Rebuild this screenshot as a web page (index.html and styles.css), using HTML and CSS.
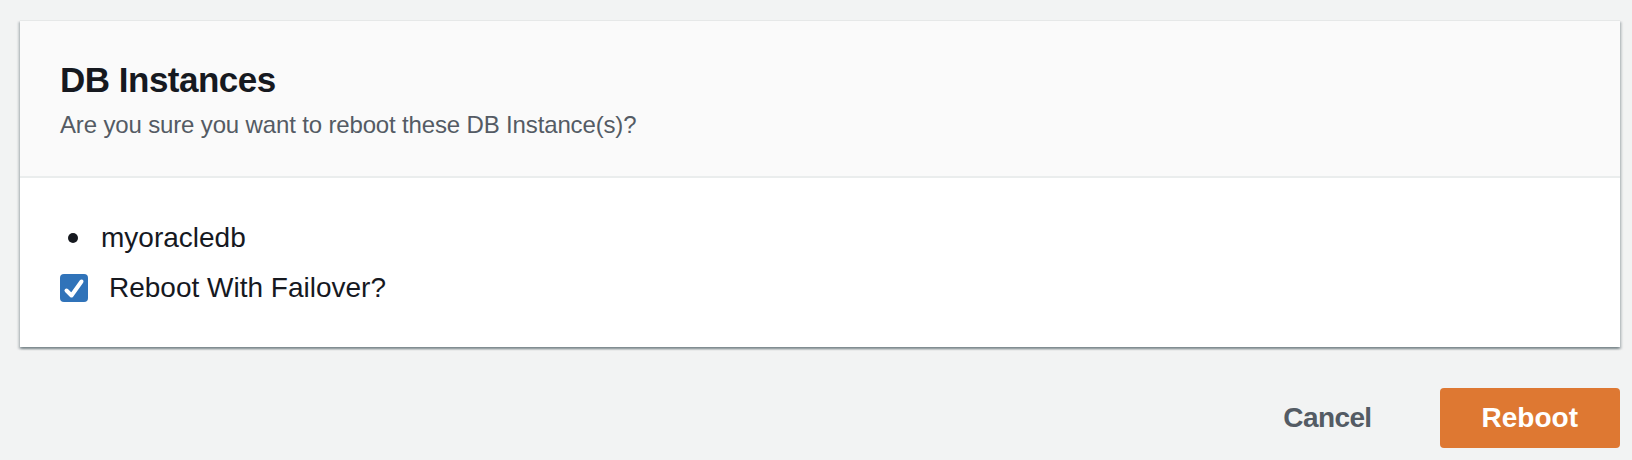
FILE: index.html
```html
<!DOCTYPE html>
<html lang="en">
<head>
<meta charset="utf-8">
<title>Reboot DB Instances</title>
<link rel="stylesheet" href="styles.css">
</head>
<body>
<div class="page">
  <section class="card">
    <header class="card-header">
      <h2 class="card-title">DB Instances</h2>
      <p class="card-desc">Are you sure you want to reboot these DB Instance(s)?</p>
    </header>
    <div class="card-body">
      <div class="item">
        <span class="dot"></span>
        <span class="item-text">myoracledb</span>
      </div>
      <label class="check-row">
        <span class="checkbox">
          <svg width="28" height="28" viewBox="0 0 28 28" aria-hidden="true">
            <path d="M6.5 16.5 L11.5 21.5 L21.5 7.5" fill="none" stroke="#fff" stroke-width="4" stroke-linecap="round" stroke-linejoin="round"/>
          </svg>
        </span>
        <span class="check-text">Reboot With Failover?</span>
      </label>
    </div>
  </section>
  <footer class="actions">
    <button class="btn btn-link" type="button">Cancel</button>
    <button class="btn btn-primary" type="button">Reboot</button>
  </footer>
</div>
</body>
</html>
```

FILE: styles.css
```css
* {
  box-sizing: border-box;
}

html, body {
  margin: 0;
  padding: 0;
  background: #f2f3f3;
}

body {
  font-family: "Liberation Sans", Arial, sans-serif;
  color: #16191f;
}

.page {
  padding: 20px 12px 12px 20px;
}

.card {
  background: #ffffff;
  border-top: 1px solid #e6e8e8;
  box-shadow: 0 2px 2px rgba(0, 28, 36, 0.3), 2px 2px 2px rgba(0, 28, 36, 0.15), -2px 2px 2px rgba(0, 28, 36, 0.15);
}

.card-header {
  background: #fafafa;
  padding: 39px 40px 35px 40px;
  border-bottom: 2px solid #eaeded;
}

.card-title {
  margin: 0;
  font-size: 35px;
  line-height: 40px;
  font-weight: 700;
  letter-spacing: -0.5px;
  color: #16191f;
}

.card-desc {
  margin: 9px 0 0 0;
  font-size: 24px;
  line-height: 32px;
  color: #545b64;
  letter-spacing: -0.15px;
}

.card-body {
  padding: 42px 40px 41px 40px;
  display: flex;
  flex-direction: column;
  gap: 14px;
}

.item {
  display: flex;
  align-items: center;
  height: 36px;
  font-size: 28px;
  line-height: 36px;
}

.dot {
  width: 10px;
  height: 10px;
  border-radius: 50%;
  background: #16191f;
  margin-left: 8px;
  margin-right: 23px;
}

.check-row {
  display: flex;
  align-items: center;
  height: 36px;
  font-size: 28px;
  line-height: 36px;
}

.checkbox {
  width: 28px;
  height: 28px;
  border-radius: 4px;
  background: #3073b9;
  display: flex;
  margin-right: 21px;
}

.checkbox svg {
  display: block;
}

.actions {
  display: flex;
  justify-content: flex-end;
  gap: 26px;
  margin-top: 41px;
}

.btn {
  font-family: "Liberation Sans", Arial, sans-serif;
  font-size: 28px;
  font-weight: 700;
  height: 60px;
  line-height: 60px;
  padding: 0 42px;
  border: none;
  border-radius: 4px;
  background: transparent;
  cursor: pointer;
}

.btn-link {
  color: #545b64;
  letter-spacing: -0.6px;
}

.btn-primary {
  background: #de7832;
  color: #ffffff;
}
```
